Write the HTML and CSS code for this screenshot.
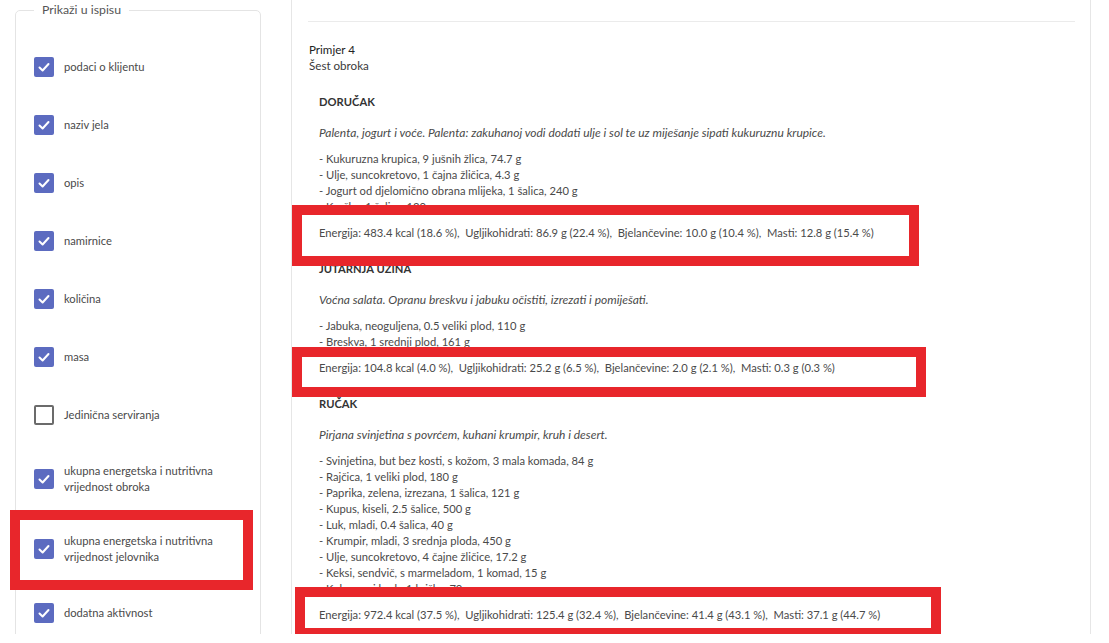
FILE: index.html
```html
<!DOCTYPE html>
<html lang="hr">
<head>
<meta charset="utf-8">
<title>Prikaži u ispisu</title>
<link rel="stylesheet" href="styles.css">
</head>
<body>
<div class="page">
  <aside class="side">
    <fieldset class="options">
      <legend>Prikaži u ispisu</legend>
      <label class="opt"><span class="cb on"><svg viewBox="0 0 20 20"><polyline points="5.5,10.5 8.6,13.5 14.5,7"/></svg></span><span class="lbl">podaci o klijentu</span></label>
      <label class="opt"><span class="cb on"><svg viewBox="0 0 20 20"><polyline points="5.5,10.5 8.6,13.5 14.5,7"/></svg></span><span class="lbl">naziv jela</span></label>
      <label class="opt"><span class="cb on"><svg viewBox="0 0 20 20"><polyline points="5.5,10.5 8.6,13.5 14.5,7"/></svg></span><span class="lbl">opis</span></label>
      <label class="opt"><span class="cb on"><svg viewBox="0 0 20 20"><polyline points="5.5,10.5 8.6,13.5 14.5,7"/></svg></span><span class="lbl">namirnice</span></label>
      <label class="opt"><span class="cb on"><svg viewBox="0 0 20 20"><polyline points="5.5,10.5 8.6,13.5 14.5,7"/></svg></span><span class="lbl">količina</span></label>
      <label class="opt"><span class="cb on"><svg viewBox="0 0 20 20"><polyline points="5.5,10.5 8.6,13.5 14.5,7"/></svg></span><span class="lbl">masa</span></label>
      <label class="opt"><span class="cb off"></span><span class="lbl">Jedinična serviranja</span></label>
      <label class="opt"><span class="cb on"><svg viewBox="0 0 20 20"><polyline points="5.5,10.5 8.6,13.5 14.5,7"/></svg></span><span class="lbl">ukupna energetska i nutritivna<br>vrijednost obroka</span></label>
      <label class="opt marked"><span class="cb on"><svg viewBox="0 0 20 20"><polyline points="5.5,10.5 8.6,13.5 14.5,7"/></svg></span><span class="lbl">ukupna energetska i nutritivna<br>vrijednost jelovnika</span></label>
      <label class="opt"><span class="cb on"><svg viewBox="0 0 20 20"><polyline points="5.5,10.5 8.6,13.5 14.5,7"/></svg></span><span class="lbl">dodatna aktivnost</span></label>
    </fieldset>
  </aside>

  <main class="preview">
    <hr class="rule">
    <div class="plan-title">
      <div class="plan-name">Primjer 4</div>
      <div class="plan-sub">Šest obroka</div>
    </div>

    <section class="meal">
      <h3 class="meal-name">DORUČAK</h3>
      <p class="meal-desc">Palenta, jogurt i voće. Palenta: zakuhanoj vodi dodati ulje i sol te uz miješanje sipati kukuruznu krupice.</p>
      <ul class="foods">
        <li>- Kukuruzna krupica, 9 jušnih žlica, 74.7 g</li>
        <li>- Ulje, suncokretovo, 1 čajna žličica, 4.3 g</li>
        <li>- Jogurt od djelomično obrana mlijeka, 1 šalica, 240 g</li>
        <li>- Kruška, 1 šalica, 130 g</li>
      </ul>
      <div class="energy e1">Energija: 483.4 kcal (18.6 %),&nbsp; Ugljikohidrati: 86.9 g (22.4 %),&nbsp; Bjelančevine: 10.0 g (10.4 %),&nbsp; Masti: 12.8 g (15.4 %)</div>
    </section>

    <section class="meal">
      <h3 class="meal-name">JUTARNJA UŽINA</h3>
      <p class="meal-desc">Voćna salata. Opranu breskvu i jabuku očistiti, izrezati i pomiješati.</p>
      <ul class="foods">
        <li>- Jabuka, neoguljena, 0.5 veliki plod, 110 g</li>
        <li>- Breskva, 1 srednji plod, 161 g</li>
      </ul>
      <div class="energy e2">Energija: 104.8 kcal (4.0 %),&nbsp; Ugljikohidrati: 25.2 g (6.5 %),&nbsp; Bjelančevine: 2.0 g (2.1 %),&nbsp; Masti: 0.3 g (0.3 %)</div>
    </section>

    <section class="meal">
      <h3 class="meal-name">RUČAK</h3>
      <p class="meal-desc">Pirjana svinjetina s povrćem, kuhani krumpir, kruh i desert.</p>
      <ul class="foods">
        <li>- Svinjetina, but bez kosti, s kožom, 3 mala komada, 84 g</li>
        <li>- Rajčica, 1 veliki plod, 180 g</li>
        <li>- Paprika, zelena, izrezana, 1 šalica, 121 g</li>
        <li>- Kupus, kiseli, 2.5 šalice, 500 g</li>
        <li>- Luk, mladi, 0.4 šalica, 40 g</li>
        <li>- Krumpir, mladi, 3 srednja ploda, 450 g</li>
        <li>- Ulje, suncokretovo, 4 čajne žličice, 17.2 g</li>
        <li>- Keksi, sendvič, s marmeladom, 1 komad, 15 g</li>
        <li>- Kukuruzni kruh, 1 kriška, 70 g</li>
      </ul>
      <div class="energy e3">Energija: 972.4 kcal (37.5 %),&nbsp; Ugljikohidrati: 125.4 g (32.4 %),&nbsp; Bjelančevine: 41.4 g (43.1 %),&nbsp; Masti: 37.1 g (44.7 %)</div>
    </section>
  </main>
</div>
</body>
</html>
```

FILE: styles.css
```css
*, *::before, *::after { box-sizing: border-box; }

html, body {
  margin: 0;
  padding: 0;
  background: #ffffff;
}

body {
  font-family: Lato, "Open Sans", "Liberation Sans", sans-serif;
  font-size: 11.2px;
  line-height: 16px;
  color: #4a4a4a;
}

.page {
  display: flex;
  height: 634px;
  overflow: hidden;
}

/* ---------- left options panel ---------- */
.side {
  width: 291px;
  flex: none;
  padding: 2px 0 0 15px;
}

.options {
  width: 246px;
  height: 700px;
  margin: 0;
  padding: 20px 18px 0 18px;
  border: 1px solid #e4e4e4;
  border-radius: 5px;
  display: flex;
  flex-direction: column;
}

.options legend {
  padding: 0 8px;
  color: #555555;
  font-size: 12.3px;
  line-height: 16px;
}

.opt {
  display: flex;
  align-items: center;
  gap: 10px;
  padding: 19px 0;
  min-height: 58px;
  position: relative;
  color: #4a4a4a;
}

.cb {
  width: 20px;
  height: 20px;
  flex: none;
  border-radius: 2px;
  display: flex;
  align-items: center;
  justify-content: center;
}

.cb.on {
  background: #5c6bc0;
}

.cb.off {
  border: 2px solid #6b6b6b;
  background: #fff;
}

.cb svg {
  width: 20px;
  height: 20px;
  fill: none;
  stroke: #ffffff;
  stroke-width: 2;
  stroke-linecap: round;
  stroke-linejoin: round;
}

.lbl {
  line-height: 16px;
}

/* annotation frame around an option */
.opt.marked::before {
  content: "";
  position: absolute;
  left: -24px;
  top: -4px;
  width: 243px;
  height: 80px;
  border: 10px solid #e8262b;
  pointer-events: none;
}

/* ---------- right preview panel ---------- */
.preview {
  width: 800px;
  flex: none;
  border-left: 1px solid #e6e6e6;
  border-right: 1px solid #e6e6e6;
  padding: 21px 15px 0 16px;
}

.rule {
  margin: 0;
  border: 0;
  border-top: 1px solid #ebebeb;
}

.plan-title {
  margin-top: 20px;
  padding-left: 1px;
  font-size: 11.6px;
}

.plan-name {
  color: #222222;
}

.plan-sub {
  color: #3a3a3a;
}

.meal {
  padding-left: 11px;
  margin-top: 20px;
}

.meal-name {
  margin: 0;
  font-size: 11.2px;
  line-height: 16px;
  font-weight: 700;
  color: #333333;
}

.meal-desc {
  margin: 15px 0 0 0;
  font-style: italic;
  font-size: 12px;
  color: #4a4a4a;
}

.foods {
  list-style: none;
  margin: 10px 0 0 0;
  padding: 0;
}

.energy {
  margin-top: 10px;
  position: relative;
  z-index: 1;
  color: #4a4a4a;
}

/* red annotation frames around the totals */
.energy::before {
  content: "";
  position: absolute;
  z-index: -1;
  background: #ffffff;
  border: 10px solid #e8262b;
}

.e1::before { left: -27px; top: -20px; width: 627px; height: 61px; }
.e2::before { left: -27px; top: -13px; width: 634px; height: 50px; }
.e3::before { left: -24px; top: -20px; width: 646px; height: 51px; }
```
